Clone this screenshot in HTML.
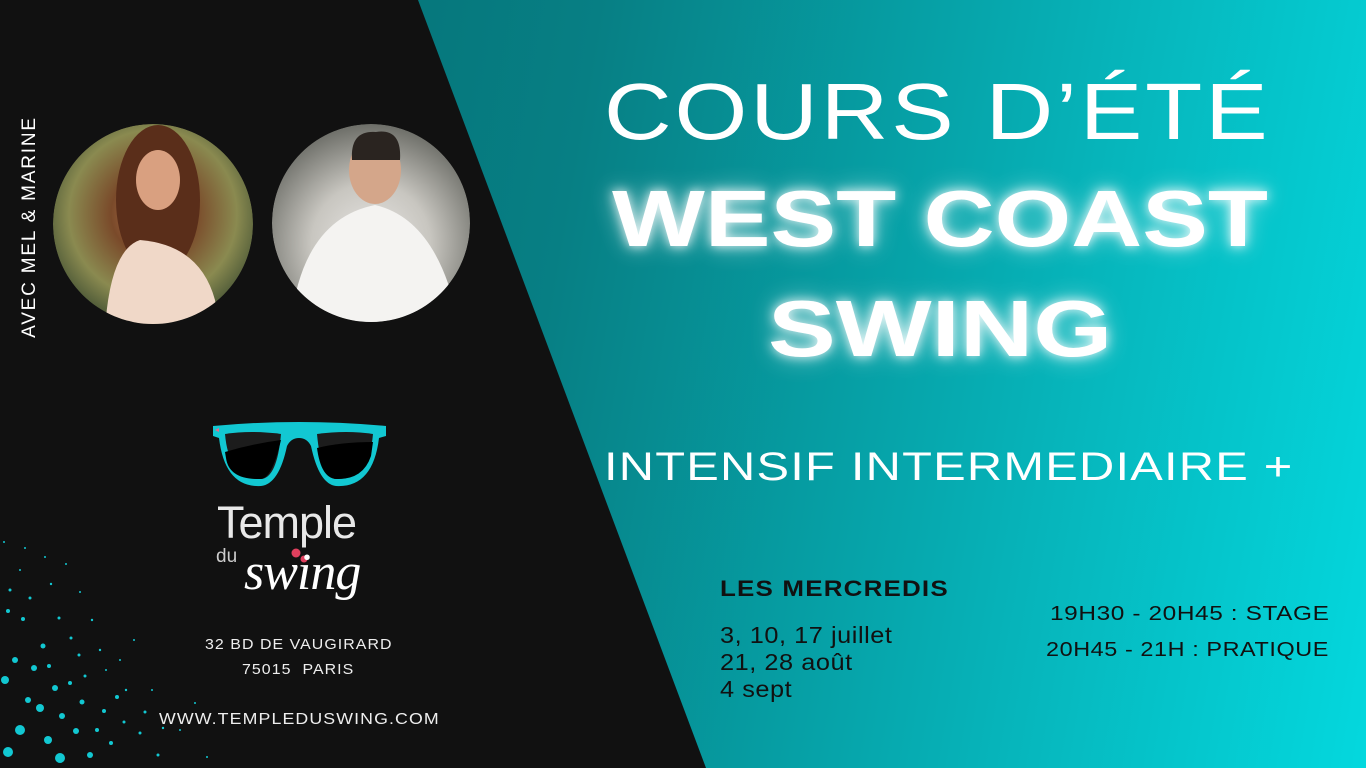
<!DOCTYPE html>
<html><head><meta charset="utf-8"><style>
body{margin:0;width:1366px;height:768px;overflow:hidden;position:relative;font-family:"Liberation Sans",sans-serif;background:linear-gradient(100deg,#04666b 0%,#077f84 40%,#06b4ba 75%,#04d8de 100%);}
.a{position:absolute;white-space:nowrap;transform-origin:left}
.glow{color:#fff;font-weight:bold;text-shadow:0 0 10px rgba(255,255,255,.9),0 0 22px rgba(255,255,255,.6)}
</style></head><body>
<svg class="a" style="left:0;top:0" width="1366" height="768">
<polygon points="0,0 418,0 706,768 0,768" fill="#111111"/>
<defs>
<radialGradient id="w" cx="50%" cy="45%" r="60%"><stop offset="0" stop-color="#c07a55"/><stop offset=".35" stop-color="#7a4a2a"/><stop offset=".7" stop-color="#8a8a50"/><stop offset="1" stop-color="#3a4a30"/></radialGradient>
<radialGradient id="m" cx="50%" cy="60%" r="60%"><stop offset="0" stop-color="#e8e6e4"/><stop offset=".5" stop-color="#c8c6c0"/><stop offset="1" stop-color="#6d6e68"/></radialGradient>
<clipPath id="c1"><circle cx="153" cy="224" r="100"/></clipPath>
<clipPath id="c2"><circle cx="371" cy="223" r="99"/></clipPath>
</defs>
<g clip-path="url(#c1)">
<circle cx="153" cy="224" r="100" fill="url(#w)"/>
<ellipse cx="158" cy="200" rx="42" ry="75" fill="#5a2e1a"/>
<ellipse cx="158" cy="180" rx="22" ry="30" fill="#d9a080"/>
<path d="M105 330 Q110 250 140 240 Q200 245 215 300 L220 330Z" fill="#f0d8c8"/>
</g>
<g clip-path="url(#c2)">
<circle cx="371" cy="223" r="99" fill="url(#m)"/>
<ellipse cx="375" cy="170" rx="26" ry="34" fill="#d4a68a"/>
<path d="M376 132 Q350 130 352 160 L400 160 Q402 128 376 132Z" fill="#2a2420"/>
<path d="M290 330 Q300 220 375 205 Q440 220 460 330Z" fill="#f4f3f1"/>
</g>
<g fill="#12c8d2">
<circle cx="5" cy="680" r="4"/><circle cx="20" cy="730" r="5"/><circle cx="40" cy="708" r="4"/><circle cx="60" cy="758" r="5"/><circle cx="8" cy="752" r="5"/>
<circle cx="15" cy="660" r="3"/><circle cx="28" cy="700" r="3"/><circle cx="34" cy="668" r="3"/><circle cx="55" cy="688" r="3"/><circle cx="62" cy="716" r="3"/><circle cx="76" cy="731" r="3"/><circle cx="82" cy="702" r="2.5"/><circle cx="90" cy="755" r="3"/><circle cx="48" cy="740" r="4"/>
<circle cx="8" cy="611" r="2"/><circle cx="23" cy="619" r="2"/><circle cx="43" cy="646" r="2.5"/><circle cx="49" cy="666" r="2"/><circle cx="70" cy="683" r="2"/><circle cx="97" cy="730" r="2"/><circle cx="104" cy="711" r="2"/><circle cx="111" cy="743" r="2"/><circle cx="117" cy="697" r="2"/><circle cx="124" cy="722" r="1.5"/><circle cx="140" cy="733" r="1.5"/><circle cx="145" cy="712" r="1.5"/><circle cx="158" cy="755" r="1.5"/><circle cx="163" cy="728" r="1.2"/>
<circle cx="10" cy="590" r="1.5"/><circle cx="30" cy="598" r="1.5"/><circle cx="51" cy="584" r="1.2"/><circle cx="59" cy="618" r="1.5"/><circle cx="71" cy="638" r="1.5"/><circle cx="79" cy="655" r="1.5"/><circle cx="85" cy="676" r="1.5"/><circle cx="92" cy="620" r="1.2"/><circle cx="100" cy="650" r="1.2"/><circle cx="106" cy="670" r="1"/><circle cx="120" cy="660" r="1"/><circle cx="126" cy="690" r="1.2"/><circle cx="134" cy="640" r="1"/><circle cx="152" cy="690" r="1"/><circle cx="20" cy="570" r="1"/><circle cx="4" cy="542" r="1"/><circle cx="25" cy="548" r="1"/><circle cx="45" cy="557" r="1"/><circle cx="66" cy="564" r="1"/><circle cx="80" cy="592" r="1"/><circle cx="180" cy="730" r="1"/><circle cx="207" cy="757" r="1"/><circle cx="195" cy="703" r="1"/>
</g>
<g transform="translate(211,422)">
<path d="M2 4 Q88 -4 175 4 L175 14 L168 16 Q162 66 125 64 Q108 62 100 24 Q96 16 88 16 Q80 16 76 24 Q68 62 50 64 Q14 66 8 16 L2 14Z" fill="#12c8d2"/>
<path d="M14 12 Q40 8 70 12 Q66 56 50 57 Q18 58 14 12Z" fill="#1c1c1c"/>
<path d="M106 12 Q136 8 162 12 Q158 58 125 57 Q110 56 106 12Z" fill="#1c1c1c"/>
<path d="M14 30 Q40 22 70 18 L68 26 Q60 56 50 57 Q18 58 15 36Z" fill="#000"/>
<path d="M106 26 Q130 20 162 20 L160 34 Q152 58 125 57 Q110 56 106 26Z" fill="#000"/>
<path d="M4 8 L8 6 L8 10Z" fill="#e86b8a"/>
</g>
<circle cx="296" cy="553" r="4.5" fill="#e0405e"/><circle cx="304" cy="559" r="3.5" fill="#e0405e"/>
</svg>
<div class="a" style="left:-92px;top:216px;width:244px;transform:rotate(-90deg);transform-origin:center;color:#fff;font-size:19px;letter-spacing:1.8px;text-align:center">AVEC MEL &amp; MARINE</div>
<div class="a" style="left:217px;top:497px;color:#e8e8e8;font-size:45px;font-weight:300;letter-spacing:-1px">Temple</div>
<div class="a" style="left:216px;top:546px;color:#ccc;font-size:19px">du</div>
<div class="a" style="left:244px;top:543px;color:#fff;font-size:52px;font-family:'Liberation Serif',serif;font-style:italic;letter-spacing:-1px">swing</div>
<div class="a" style="left:205px;top:636px;color:#eee;font-size:15px;letter-spacing:1px;transform:scaleX(1.06)">32 BD DE VAUGIRARD</div>
<div class="a" style="left:242px;top:661px;color:#eee;font-size:15px;letter-spacing:1px;transform:scaleX(1.06)">75015&nbsp; PARIS</div>
<div class="a" style="left:159px;top:711px;color:#eee;font-size:16px;letter-spacing:1px;transform:scaleX(1.11)">WWW.TEMPLEDUSWING.COM</div>
<div class="a" style="left:604px;top:66px;color:#fff;font-size:80px;letter-spacing:2.5px;transform:scaleX(1.17)">COURS D’ÉTÉ</div>
<div class="a glow" style="left:612px;top:173px;font-size:80px;transform:scaleX(1.23)">WEST COAST</div>
<div class="a glow" style="left:768px;top:283px;font-size:80px;transform:scaleX(1.27)">SWING</div>
<div class="a" style="left:604px;top:445px;color:#fff;font-size:40px;letter-spacing:1px;transform:scaleX(1.22)">INTENSIF INTERMEDIAIRE +</div>
<div class="a" style="left:720px;top:576px;color:#111;font-size:22px;font-weight:bold;letter-spacing:1px;transform:scaleX(1.18)">LES MERCREDIS</div>
<div class="a" style="left:720px;top:622px;color:#111;font-size:23px;line-height:27px;letter-spacing:.5px;transform:scaleX(1.1)">3, 10, 17 juillet<br>21, 28 août<br>4 sept</div>
<div class="a" style="left:1050px;top:603px;color:#111;font-size:20px;letter-spacing:.5px;transform:scaleX(1.22)">19H30 - 20H45 : STAGE</div>
<div class="a" style="left:1046px;top:639px;color:#111;font-size:20px;letter-spacing:.5px;transform:scaleX(1.17)">20H45 - 21H : PRATIQUE</div>
</body></html>
